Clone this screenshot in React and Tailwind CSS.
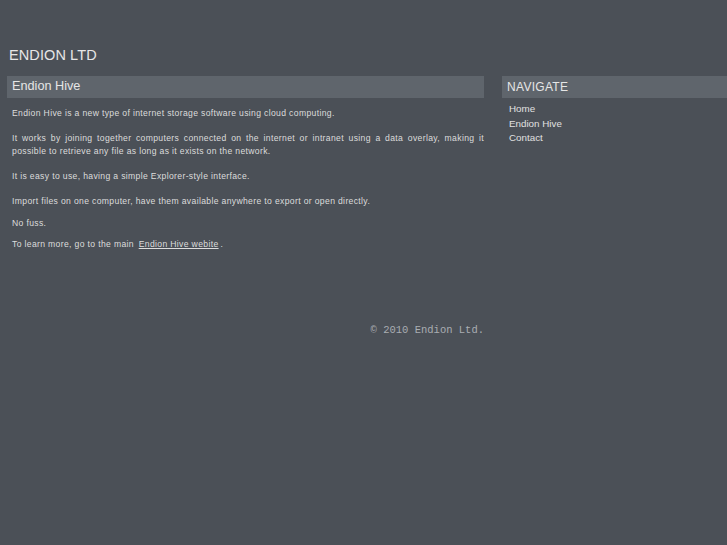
const navLinks = ["Home", "Endion Hive", "Contact"];

const App = () => {
    return (
        <div className="min-h-screen w-full bg-[#4b5057] font-['Liberation_Sans',Arial,sans-serif] text-[#dcdcdc] overflow-hidden">
            <div className="pt-[45px] pl-[9px]">
                <h1 className="text-[14.5px] leading-[20px] text-[#e6e6e6] tracking-[0.1px]">ENDION LTD</h1>
            </div>
            <div className="flex gap-[18px] pl-[7px] pt-[11px]">
                <div className="w-[477px] shrink-0">
                    <div className="bg-[#5f656c] h-[22px] pl-[5px] flex items-center">
                        <h2 className="text-[12.7px] text-[#e6e6e6]">Endion Hive</h2>
                    </div>
                    <div className="pl-[5px] pt-[9px] text-[8.6px] leading-[13px] tracking-[0.35px]">
                        <p className="mb-[12px]">Endion Hive is a new type of internet storage software using cloud computing.</p>
                        <p className="mb-[12px] text-justify">It works by joining together computers connected on the internet or intranet using a data overlay, making it possible to retrieve any file as long as it exists on the network.</p>
                        <p className="mb-[12px]">It is easy to use, having a simple Explorer-style interface.</p>
                        <p className="mb-[9px]">Import files on one computer, have them available anywhere to export or open directly.</p>
                        <p className="mb-[8px]">No fuss.</p>
                        <p>
                            To learn more, go to the main{" "}
                            <a href="#" className="underline ml-[2px] mr-[2px]">Endion Hive webite</a>.
                        </p>
                    </div>
                    <div className="text-right pt-[72px] font-['Liberation_Mono',monospace] text-[10.5px] text-[#a9adb2]">
                        © 2010 Endion Ltd.
                    </div>
                </div>
                <div className="flex-1">
                    <div className="bg-[#5f656c] h-[22px] pl-[5px] flex items-center">
                        <h2 className="text-[12px] text-[#e6e6e6] tracking-[0.3px]">NAVIGATE</h2>
                    </div>
                    <ul className="pl-[7px] pt-[4px] text-[9.8px] leading-[14.5px]">
                        {navLinks.map((link) => (
                            <li key={link}>
                                <a href="#" className="text-[#e0e0e0]">{link}</a>
                            </li>
                        ))}
                    </ul>
                </div>
            </div>
        </div>
    );
};

export default App;
